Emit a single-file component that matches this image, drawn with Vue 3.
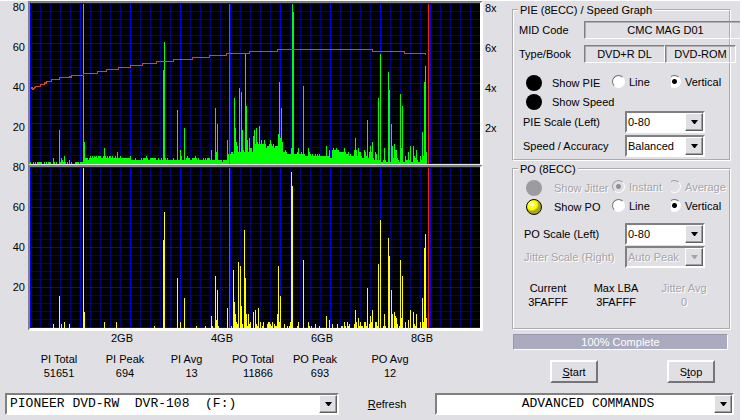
<script setup>
import { ref } from 'vue'

const WIDTH = 450
const HEIGHT = 161

// Each run is [first column, [height of each following column]]
const pieRuns = [
  [0, [2, 0, 0, 2, 0, 2, 0, 2, 2, 2, 2, 2, 0, 0, 2, 0, 2, 0, 2, 2, 2, 0, 0, 6, 2, 0, 2, 0, 0, 34, 2, 6, 4, 2, 8, 2, 0, 2, 0, 4, 0, 2, 0, 0, 0, 2, 2, 2, 2, 0, 2, 2, 2]],
  [53, [160, 22, 6, 6, 6, 4, 6, 8, 6, 8, 6, 8, 7, 8, 6, 8, 8, 8, 6, 6, 8, 16, 8, 6, 8, 6, 8, 8, 6, 8, 6, 6, 8, 6, 12, 6, 6, 8, 6, 6, 6, 6, 6, 6, 6, 6, 6, 8]],
  [98, [4, 4, 4, 4, 4, 4, 4, 6, 4, 4, 4, 4, 4, 6, 4, 6, 6, 6, 8, 6, 4, 4, 6, 6, 6, 6, 6, 6, 4, 4, 6, 4, 4, 6, 4]],
  [133, [94, 122, 6, 4, 6, 4, 4, 4, 4, 4, 6, 4, 4, 4, 54, 4, 4, 14, 8, 4, 4, 36, 4, 6, 8, 6, 6, 4, 4, 6, 6, 6, 8, 6, 4, 6, 4, 4, 4, 4, 6, 4, 6, 4, 6, 6, 6, 4, 14, 4, 4, 4, 56, 12, 40, 4, 4, 4, 4, 2, 4, 4, 4, 4, 24, 10]],
  [199, [10, 10, 12, 12, 10, 66, 36, 22, 18, 12, 76, 12, 72, 34, 14, 12, 110, 58, 24, 12, 26, 16, 16, 12, 28, 34, 20, 36, 22, 20, 38, 20, 24, 20, 20, 24, 20, 16, 18, 18, 20, 24, 20, 18, 20, 16, 18, 18, 18, 30, 82, 26, 56, 22, 12, 12, 14, 12, 10, 10, 10, 10, 16, 160, 152]],
  [263, [10, 10, 10, 10, 12, 16, 10, 10, 12, 10, 78, 10, 8, 8, 8, 16, 12, 10, 8, 10, 8, 8, 10, 8, 10, 8, 10, 8, 8, 8, 8, 8, 8, 18, 8, 8, 14, 6, 6, 14, 16, 14, 14, 16, 14, 14, 12, 12, 12, 12, 12, 16, 12, 10, 10, 12, 8, 10, 8, 8, 8, 14, 26, 14, 8, 16, 12, 12, 8, 6, 6, 14, 12, 8, 44, 6, 12, 18, 12, 22, 6, 4, 12, 10, 4, 66, 4, 110, 2, 2, 4, 16, 4, 2, 2, 92, 74, 2, 40, 18, 6, 20, 14, 14, 6, 4, 2, 70, 16, 58, 2, 2, 8, 4, 4, 12, 4, 18, 2, 2, 18, 8, 6, 14, 4, 2, 2, 8, 4, 32, 8, 82, 98, 12]],
]

const poRuns = [
  [23, [4]], [29, [32, 0, 4]], [34, [6]], [39, [4]], [53, [160, 16]], [74, [6]], [86, [6]], [124, [2]],
  [133, [88, 116]], [147, [50, 0, 0, 6]], [154, [30]], [166, [2]], [175, [2]],
  [181, [12, 2, 0, 0, 52, 8, 38, 2]], [197, [20]],
  [201, [2, 0, 58, 26, 14, 6, 4, 66, 0, 62, 22, 4, 0, 98, 50, 14, 2, 14, 4, 6]],
  [223, [16, 0, 18, 4, 2, 20, 0, 6, 0, 2, 6]],
  [237, [4, 6, 6, 4, 2, 6, 0, 4, 2, 2, 14, 62, 6, 32]],
  [254, [4, 0, 0, 2, 0, 2, 6, 156, 142]], [267, [2, 6]], [273, [68]], [278, [6, 2, 0, 2]],
  [285, [4]], [289, [2]], [296, [12, 0, 0, 8]], [302, [4]], [307, [4]],
  [311, [2, 2, 0, 6, 2, 0, 6, 2, 4]],
  [324, [4, 18, 6, 0, 10, 2, 6, 2, 2, 0, 6, 6, 2, 40, 0, 4, 12, 6, 18]],
  [345, [6, 6, 2, 64, 0, 108]], [353, [2, 14, 2]],
  [358, [90, 72, 0, 38, 14, 0, 16, 12, 10, 4, 0, 2, 68, 10, 52, 0, 0, 6, 0, 0, 8, 0, 18, 0, 0, 16, 4, 2, 14]],
  [390, [6, 0, 30, 6, 80, 94, 10]],
]

// Read speed: [column, row]; the trace steps from one level to the next
const speed = [
  [0, 85], [1, 84], [2, 86], [3, 85], [4, 84], [5, 83], [10, 81], [14, 79], [15, 80], [16, 78], [21, 76],
  [29, 74], [39, 73], [40, 74], [41, 72], [53, 70], [67, 68], [76, 66], [88, 64], [100, 62], [112, 60],
  [126, 58], [143, 56], [162, 54], [179, 52], [196, 50], [219, 48], [247, 46], [342, 48], [374, 50], [395, 51],
]

const barPath = (runs) =>
  runs
    .map(([start, heights]) =>
      heights.map((h, i) => (h ? `M${start + i} ${HEIGHT}v-${h}h1v${h}z` : '')).join('')
    )
    .join('')

const speedPath = speed
  .map(([x, y], i) => {
    if (!i) return `M${x} ${y}`
    return `H${x}V${y}`
  })
  .join('')

const lines = (length, step, major, wantMajor) =>
  Array.from({ length: Math.ceil(length / step) }, (_, i) => i * step).filter(
    (v) => (v % major === 0) === wantMajor
  )
const gridPath = (wantMajor) =>
  lines(HEIGHT, 8, 40, wantMajor).map((y) => `M0 ${y}h${WIDTH}v1H0z`).join('') +
  lines(WIDTH, 10, 50, wantMajor).map((x) => `M${x} 0h1v${HEIGHT}h-1z`).join('')

const minorGrid = gridPath(false)
const majorGrid = gridPath(true)

const plots = [
  { name: 'PIE and speed', kind: 'pie', bars: barPath(pieRuns), speed: speedPath },
  { name: 'PO', kind: 'po', bars: barPath(poRuns), speed: '' },
]

const leftAxis = [80, 60, 40, 20, 80, 60, 40, 20]
const rightAxis = ['8x', '6x', '4x', '2x']
const capacities = ['2GB', '4GB', '6GB', '8GB']
const stats = [
  ['PI Total', '51651'],
  ['PI Peak', '694'],
  ['PI Avg', '13'],
  ['PO Total', '11866'],
  ['PO Peak', '693'],
  ['PO Avg', '12'],
]

const pieStyle = ref('vertical')
const poStyle = ref('vertical')
const jitterMode = ref('instant')
const showPie = ref(false)
const showSpeed = ref(false)
const showPo = ref(true)
</script>

<template>
  <main class="app">
    <div class="workspace">
      <section class="charts">
        <div class="chart-area">
          <div class="axis axis-left">
            <span v-for="(v, i) in leftAxis" :key="i">{{ v }}</span>
          </div>
          <div class="plots">
            <div v-for="plot in plots" :key="plot.kind" class="plot" :class="plot.kind">
              <svg
                :viewBox="`0 0 ${WIDTH} ${HEIGHT}`"
                preserveAspectRatio="none"
                shape-rendering="crispEdges"
                role="img"
                :aria-label="plot.name"
              >
                <path class="grid-minor" :d="minorGrid" />
                <path class="grid-major" :d="majorGrid" />
                <path class="bars" :d="plot.bars" />
                <path v-if="plot.speed" class="speed" :d="plot.speed" transform="translate(0.5 0.5)" />
                <path class="layer" :d="`M199 1h1v${HEIGHT}h-1z`" />
                <path class="end" :d="`M398 1h1v${HEIGHT}h-1z`" />
              </svg>
            </div>
          </div>
          <div class="axis axis-right">
            <span v-for="v in rightAxis" :key="v">{{ v }}</span>
          </div>
        </div>
        <div class="capacity">
          <span v-for="c in capacities" :key="c">{{ c }}</span>
        </div>
        <dl class="stats">
          <div v-for="[name, value] in stats" :key="name">
            <dt>{{ name }}</dt>
            <dd>{{ value }}</dd>
          </div>
        </dl>
      </section>

      <aside class="panel">
        <fieldset class="group group-pie">
          <legend>PIE (8ECC) / Speed Graph</legend>
          <div class="info">
            <span>MID Code</span>
            <span class="box wide">CMC MAG D01</span>
          </div>
          <div class="info">
            <span>Type/Book</span>
            <span class="box">DVD+R DL</span>
            <span class="box book">DVD-ROM</span>
          </div>
          <div class="options">
            <div class="option">
              <input id="show-pie" v-model="showPie" class="led" type="checkbox" />
              <label for="show-pie">Show PIE</label>
              <label class="choice"><input v-model="pieStyle" type="radio" name="pie" value="line" />Line</label>
              <label class="choice"><input v-model="pieStyle" type="radio" name="pie" value="vertical" />Vertical</label>
            </div>
            <div class="option">
              <input id="show-speed" v-model="showSpeed" class="led" type="checkbox" />
              <label for="show-speed">Show Speed</label>
            </div>
          </div>
          <div class="scales">
            <label for="pie-scale">PIE Scale (Left)</label>
            <div class="combo">
              <select id="pie-scale"><option>0-80</option></select>
              <span class="drop"><svg viewBox="0 0 7 4"><path d="M0 0h7l-3 4h-1z" /></svg></span>
            </div>
            <label for="accuracy">Speed / Accuracy</label>
            <div class="combo">
              <select id="accuracy"><option>Balanced</option></select>
              <span class="drop"><svg viewBox="0 0 7 4"><path d="M0 0h7l-3 4h-1z" /></svg></span>
            </div>
          </div>
        </fieldset>

        <fieldset class="group group-po">
          <legend>PO (8ECC)</legend>
          <div class="options">
            <div class="option off">
              <input id="show-jitter" class="led" type="checkbox" disabled />
              <label for="show-jitter">Show Jitter</label>
              <label class="choice"><input v-model="jitterMode" type="radio" name="jitter" value="instant" disabled />Instant</label>
              <label class="choice"><input v-model="jitterMode" type="radio" name="jitter" value="average" disabled />Average</label>
            </div>
            <div class="option">
              <input id="show-po" v-model="showPo" class="led" type="checkbox" />
              <label for="show-po">Show PO</label>
              <label class="choice"><input v-model="poStyle" type="radio" name="po" value="line" />Line</label>
              <label class="choice"><input v-model="poStyle" type="radio" name="po" value="vertical" />Vertical</label>
            </div>
          </div>
          <div class="scales">
            <label for="po-scale">PO Scale (Left)</label>
            <div class="combo">
              <select id="po-scale"><option>0-80</option></select>
              <span class="drop"><svg viewBox="0 0 7 4"><path d="M0 0h7l-3 4h-1z" /></svg></span>
            </div>
            <label for="jitter-scale" class="off">Jitter Scale (Right)</label>
            <div class="combo off">
              <select id="jitter-scale" disabled><option>Auto Peak</option></select>
              <span class="drop"><svg viewBox="0 0 7 4"><path d="M0 0h7l-3 4h-1z" /></svg></span>
            </div>
          </div>
          <dl class="position">
            <div><dt>Current</dt><dd>3FAFFF</dd></div>
            <div><dt>Max LBA</dt><dd>3FAFFF</dd></div>
            <div class="off"><dt>Jitter Avg</dt><dd>0</dd></div>
          </dl>
        </fieldset>

        <div class="progress" role="progressbar" aria-valuenow="100">100% Complete</div>
        <div class="actions">
          <button type="button"><u>S</u>tart</button>
          <button type="button">S<u>t</u>op</button>
        </div>
      </aside>
    </div>

    <footer class="bottom">
      <div class="combo device">
        <select aria-label="Drive"><option>PIONEER DVD-RW&nbsp; DVR-108&nbsp; (F:)</option></select>
        <span class="drop"><svg viewBox="0 0 7 4"><path d="M0 0h7l-3 4h-1z" /></svg></span>
      </div>
      <button type="button" class="refresh"><u>R</u>efresh</button>
      <div class="combo commands">
        <select aria-label="Commands"><option>ADVANCED COMMANDS</option></select>
        <span class="drop"><svg viewBox="0 0 7 4"><path d="M0 0h7l-3 4h-1z" /></svg></span>
      </div>
    </footer>
  </main>
</template>

<style>
body {
  background: #e0dfe4;
}
</style>

<style scoped>
.app {
  box-sizing: border-box;
  min-height: 100vh;
  padding-bottom: 4px;
  border-top: 1px solid #fff;
  border-right: 2px solid #fff;
  background: #e0dfe4;
  color: #000;
  font: 11px/12px "Liberation Sans", Arial, sans-serif;
  overflow: hidden;
}
.app * {
  box-sizing: border-box;
}
.workspace {
  display: grid;
  grid-template-columns: 1fr 228px;
}

/* Charts */
.chart-area {
  display: grid;
  grid-template-columns: 28px 1fr 29px;
}
.axis {
  display: flex;
  flex-direction: column;
  gap: 28px;
}
.axis-left {
  padding-right: 3px;
  text-align: right;
}
.axis-right {
  padding: 1px 0 0 2px;
}
.plot {
  border: solid #fff;
  border-width: 2px 3px 1px 2px;
  border-top-color: #808080;
  border-left-color: #808080;
  border-bottom-color: #e8e8ea;
}
.plot.po {
  border-bottom: 3px solid #fff;
}
.plot svg {
  display: block;
  width: 100%;
  height: 161px;
  background: #000;
}
.grid-minor {
  fill: #000084;
}
.grid-major {
  fill: #0000f0;
}
.pie .bars {
  fill: #00ff00;
}
.po .bars {
  fill: #ffff00;
}
.speed {
  fill: none;
  stroke: #d04428;
}
.layer {
  fill: #d83820;
}
.end {
  fill: #ff2000;
}
.capacity {
  display: grid;
  grid-template-columns: 42fr 100fr 100fr 100fr 100fr 8fr;
  margin: 1px 32px 0 30px;
  text-align: center;
}
.capacity span:first-child {
  grid-column: 2;
}
.stats {
  display: grid;
  grid-template-columns: 66fr 66fr 57fr 76fr 48fr 102fr;
  margin: 9px 71px 0 26px;
  text-align: center;
}
dt,
dd {
  margin: 0;
  white-space: nowrap;
}
dd {
  margin-top: 2px;
}
.stats div:nth-child(n + 3):nth-child(-n + 5) dd {
  padding-left: 10px;
}

/* Settings panel */
.panel {
  padding: 3px 9px 0 0;
}
.group {
  min-width: 0;
  margin: 0;
  padding: 0;
  border: 2px groove #fff;
}
.group legend {
  margin-left: 4px;
  padding: 0 2px;
}
.group-pie {
  padding: 5px 0 2px;
}
.group-po {
  margin-top: 2px;
  padding: 3px 0 20px;
}
.info {
  display: grid;
  grid-template-columns: 65px 81px 71px;
  gap: 0;
  align-items: center;
  width: 217px;
  margin-bottom: 6px;
  padding-left: 5px;
}
.box {
  height: 18px;
  border: 1px solid #808080;
  border-bottom-color: #fff;
  border-right-color: #fff;
  box-shadow: inset 1px 1px 0 #b0b0b4;
  line-height: 17px;
  text-align: center;
}
.box.wide {
  grid-column: 2 / 4;
  margin-right: -5px;
  padding-left: 6px;
}
.options {
  padding-left: 12px;
}
.group-pie .options {
  padding-top: 4px;
}
.option {
  display: grid;
  grid-template-columns: 26px 60px 56px 1fr;
  align-items: center;
  height: 19px;
  white-space: nowrap;
}
.group-po .option {
  grid-template-columns: 28px 58px 56px 1fr;
}
.choice {
  display: flex;
  align-items: center;
  gap: 4px;
  height: 13px;
  margin-top: -2px;
}
input {
  appearance: none;
  margin: 0;
}
.led {
  width: 16px;
  height: 16px;
  border-radius: 50%;
  background: #000;
}
.led:checked {
  border: 1px solid #000;
  background: radial-gradient(circle at 35% 32%, #fff 0 1px, #ffff00 3px 5px, #a8a820 7px);
}
.led:disabled {
  background: #9c9c9e;
}
input[type="radio"] {
  width: 13px;
  height: 13px;
  border: 1px solid #fff;
  border-top-color: #707070;
  border-left-color: #707070;
  border-radius: 50%;
  background: #fff;
}
input[type="radio"]:checked {
  background: radial-gradient(circle, #000 0 2px, #fff 3px);
}
.choice + .choice input[type="radio"] {
  border-left-color: transparent;
  clip-path: inset(0 0 0 3px);
}
input[type="radio"]:disabled {
  border-top-color: #a0a0a0;
  border-left-color: #a0a0a0;
  background: #e0dfe4;
}
input[type="radio"]:disabled:checked {
  background: radial-gradient(circle, #909090 0 2px, #e0dfe4 3px);
}
.off {
  color: #a4a4a8;
  text-shadow: 1px 1px 0 #fff;
}
.scales {
  display: grid;
  grid-template-columns: 102px 80px;
  row-gap: 1px;
  align-items: center;
  padding: 1px 0 0 9px;
}
.group-pie .scales {
  row-gap: 2px;
  padding-top: 0;
}
.group-po .scales {
  padding: 7px 0 0 10px;
  grid-template-columns: 101px 80px;
}
.combo {
  display: grid;
  grid-template-columns: 1fr 20px;
  height: 22px;
}
.combo select {
  grid-area: 1 / 1 / 2 / 3;
  width: 100%;
  height: 22px;
  margin: 0;
  padding: 0 20px 0 1px;
  border: 2px solid #fff;
  border-top-color: #808080;
  border-left-color: #808080;
  border-radius: 0;
  appearance: none;
  background: #fff;
  color: #000;
  font: inherit;
}
.drop {
  grid-area: 1 / 2;
  display: flex;
  align-items: center;
  justify-content: center;
  margin: 2px 2px 2px 0;
  border: 1px solid #606060;
  border-top-color: #fff;
  border-left-color: #fff;
  background: #e0dfe4;
  box-shadow: inset -1px -1px 0 #a0a0a4;
  pointer-events: none;
}
.drop svg {
  width: 7px;
  height: 4px;
}
.combo.off select {
  background: #e0dfe4;
  color: #a4a4a8;
  text-shadow: inherit;
  opacity: 1;
}
.combo.off path {
  fill: #a4a4a8;
}
.position {
  display: grid;
  grid-template-columns: 68px 68px 1fr;
  margin: 14px 11px 0 0;
  text-align: center;
}
.progress {
  height: 16px;
  margin: 4px 3px 0 1px;
  border: 1px solid #fff;
  border-top-color: #9899a8;
  border-left-color: #9899a8;
  background: #aaabc0;
  color: #fff;
  line-height: 15px;
  text-align: center;
}
.actions {
  display: flex;
  justify-content: space-between;
  padding: 10px 16px 0 38px;
}
.actions button {
  width: 48px;
  height: 23px;
  padding: 0;
  border: 2px solid #75757a;
  border-top-color: #fff;
  border-left-color: #fff;
  background: #e0dfe4;
  color: #000;
  font: inherit;
}

/* Bottom bar */
.bottom {
  display: grid;
  grid-template-columns: 334fr 96px 299fr;
  margin-top: 10px;
  padding: 0 6px 0 5px;
}
.bottom .combo {
  font-family: "Liberation Mono", "Courier New", monospace;
  font-size: 13px;
}
.device select {
  padding-left: 3px;
}
.commands select {
  padding-left: 27px;
  text-align: center;
  text-align-last: center;
}
.refresh {
  padding: 0;
  border: 0;
  background: none;
  color: inherit;
  font: inherit;
}
</style>
